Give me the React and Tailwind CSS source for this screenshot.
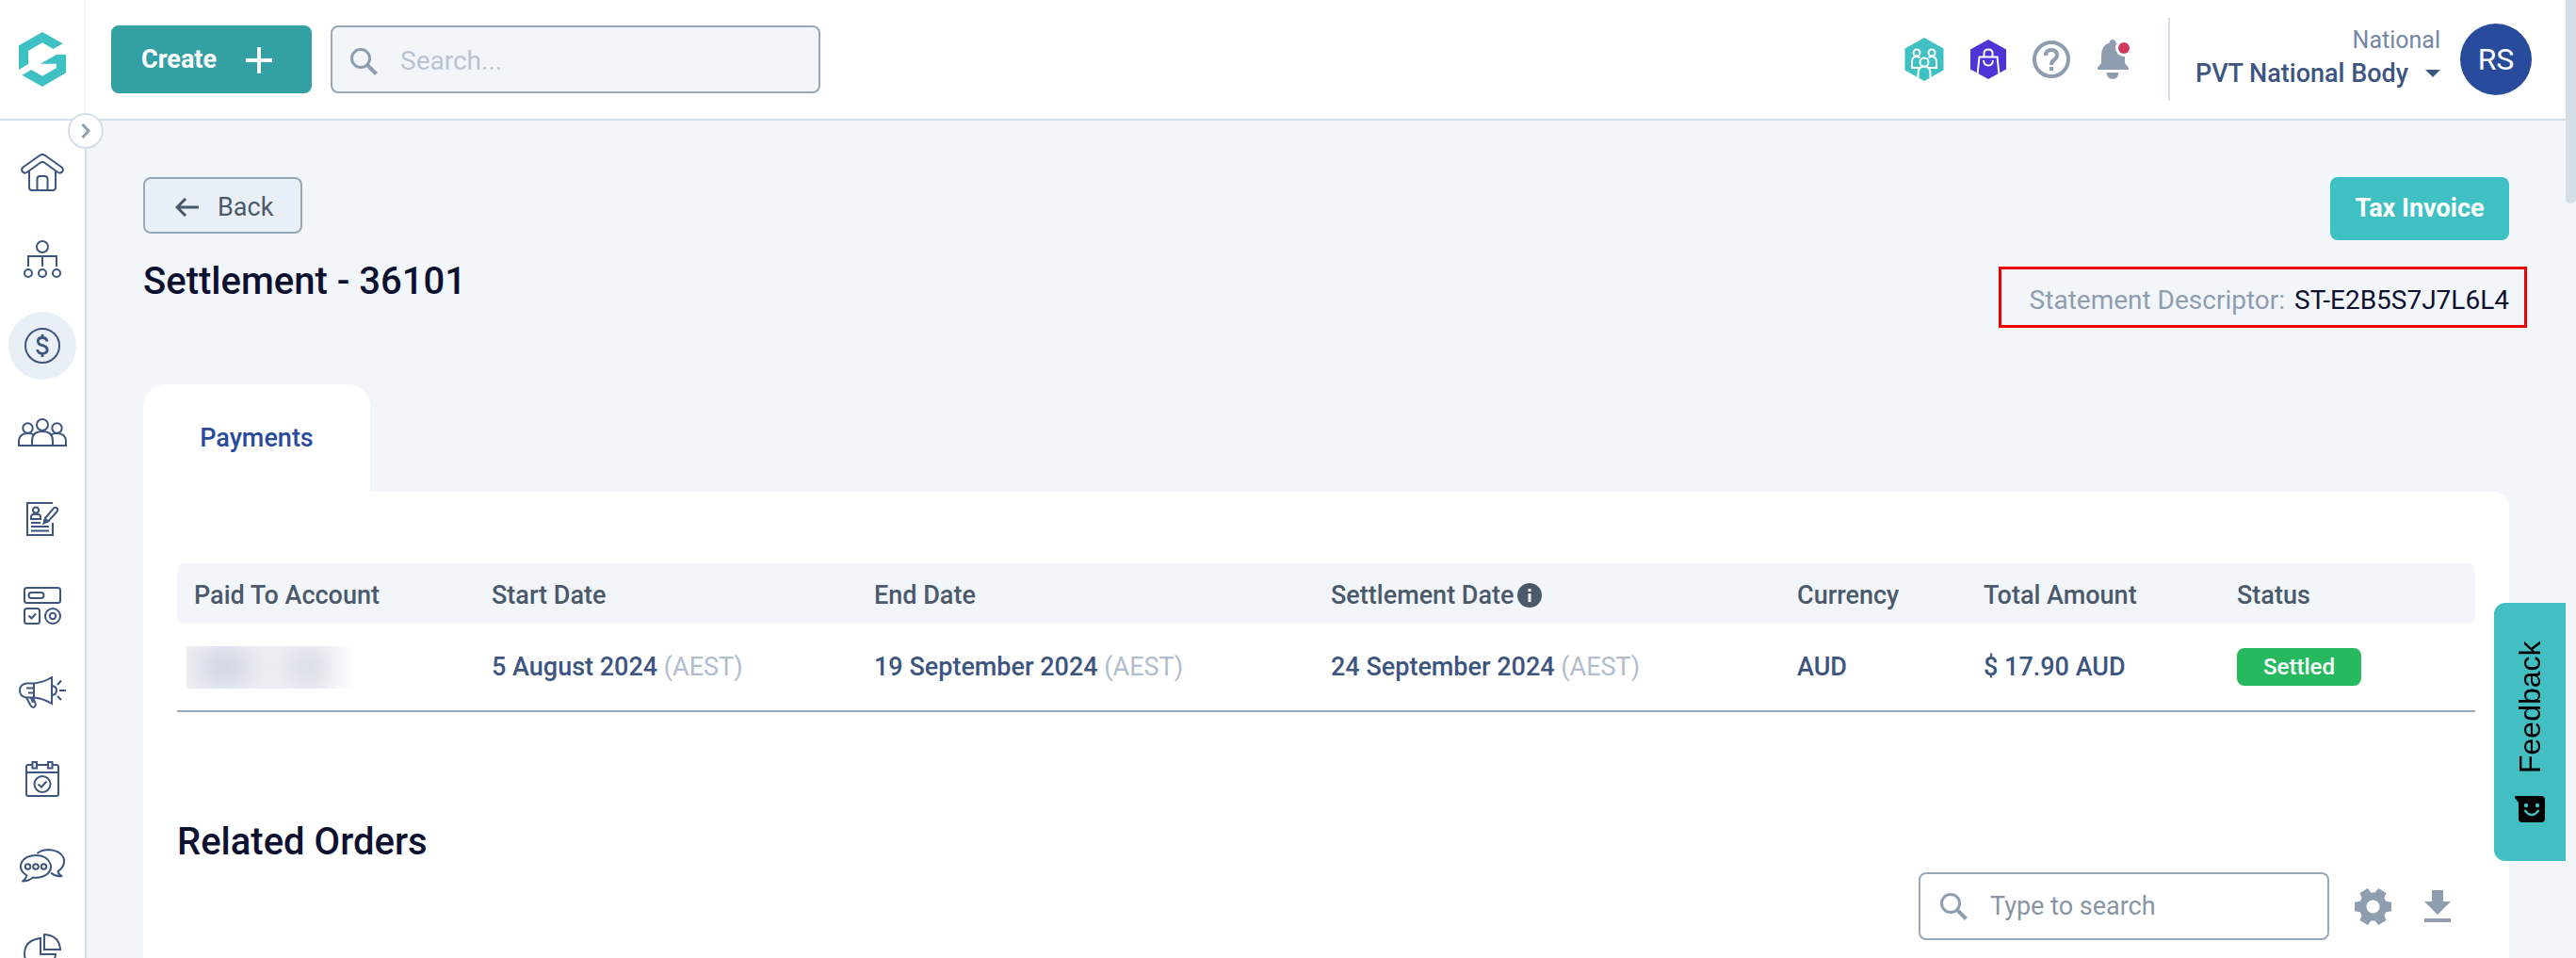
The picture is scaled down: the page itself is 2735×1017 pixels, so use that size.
import React, { useState } from 'react';

// Line icons for the side bar, all drawn on their own pixel grid
const HomeIcon = () => (
  <svg width="46" height="40" viewBox="0 0 46 40" fill="none" stroke="currentColor" strokeWidth="2" strokeLinejoin="round">
    <path d="M20.500 1.800Q23 .4 25.500 1.800L43.500 14.500Q46 17 44 19.500Q42 21.500 39.500 20L26 10.200Q23 8 20 10.200L6.500 20Q4 21.500 2 19.500Q0 17 2.500 14.500Z" />
    <path d="M9 18.500V36Q9 39 12 39H34Q37 39 37 36V18.500" />
    <path d="M17.500 38V27Q17.500 24 20.500 24H25.500Q28.500 24 28.500 27V38" />
  </svg>
);

const OrgIcon = () => (
  <svg width="40" height="40" viewBox="0 0 40 40" fill="none" stroke="currentColor" strokeWidth="2">
    <circle cx="20" cy="7" r="6" />
    <path d="M5 28V17H35V28M20 17V28" />
    <circle cx="5" cy="35" r="4" />
    <circle cx="20" cy="35" r="4" />
    <circle cx="35" cy="35" r="4" />
  </svg>
);

const DollarIcon = () => (
  <svg width="38" height="38" viewBox="0 0 38 38" fill="none" stroke="currentColor" strokeWidth="2">
    <circle cx="19" cy="19" r="18" />
    <path strokeWidth="2.800" d="M24 14.500Q23.500 10.500 19 10.500Q14.300 10.500 14.300 14.200Q14.300 17.500 19 18.700Q24.200 20 24.200 23.600Q24.200 27.300 19 27.300Q14 27.300 13.700 23M19 7V11M19 27V31" />
  </svg>
);

const PeopleIcon = () => (
  <svg width="52" height="30" viewBox="0 0 52 30" fill="none" stroke="currentColor" strokeWidth="2">
    <circle cx="26" cy="7" r="6" />
    <circle cx="10.500" cy="10.500" r="5.200" />
    <circle cx="41.500" cy="10.500" r="5.200" />
    <path d="M15 29V24Q15 14 26 14Q37 14 37 24V29" />
    <path d="M17 17.500Q14.500 16 10.500 16Q1 16 1 25V29H51V25Q51 16 41.500 16Q37.500 16 35 17.500" />
  </svg>
);

const FormIcon = () => (
  <svg width="34" height="36" viewBox="0 0 34 36" fill="none" stroke="currentColor" strokeWidth="2">
    <path d="M28 1H1V35H28V22" />
    <circle cx="10" cy="8.500" r="3" />
    <path d="M5 18V16Q5 13 8 13H12Q15 13 15 16V18ZM5 22H15M5 26H24M5 30.500H24" />
    <path d="M19 22L20 17L29 6.500Q31 5 32.500 6.500Q34 8 32.500 10L23.500 20.200Z" />
    <path d="M18.500 22.500L20 17.500L23 20.500Z" fill="currentColor" />
  </svg>
);

const WidgetsIcon = () => (
  <svg width="40" height="40" viewBox="0 0 40 40" fill="none" stroke="currentColor" strokeWidth="2">
    <rect x="1" y="1" width="38" height="16" rx="2.500" />
    <rect x="5.500" y="6" width="16" height="6" rx="3" />
    <rect x="1" y="23" width="16" height="16" rx="2.500" />
    <path d="M5.500 30.500L8.500 33.500L13 28.500" />
    <circle cx="31" cy="31" r="8" />
    <circle cx="31" cy="31" r="3.200" />
  </svg>
);

const MegaphoneIcon = () => (
  <svg width="50" height="34" viewBox="0 0 50 34" fill="none" stroke="currentColor" strokeWidth="2">
    <path d="M16 7.500H8Q1 8.500 1 15Q1 21.500 8 22.500H16ZM16 7.500Q26 6.500 35 1V29Q26 23.500 16 22.500M8 12.500H15M10 17.500H15" />
    <path d="M8 22.500L12.500 31Q14 33.500 16.500 32.500Q18.500 31 17.500 28.500L15 22.500M13 23L15 28" />
    <path d="M35 10Q40 10.500 40 15Q40 19.500 35 20M41 9L45 4.500M43 15H50M41 21L45 25" />
  </svg>
);

const CalendarIcon = () => (
  <svg width="36" height="38" viewBox="0 0 36 38" fill="none" stroke="currentColor" strokeWidth="2">
    <path d="M7 4H3Q1 4 1 6V35Q1 37 3 37H33Q35 37 35 35V6Q35 4 33 4H29M12 4H24M1 12H35" />
    <rect x="7.500" y="1" width="4.500" height="6.500" />
    <rect x="24" y="1" width="4.500" height="6.500" />
    <circle cx="18" cy="24.500" r="8.500" />
    <path d="M13.500 24.500L17 27.500L22.500 21.500" />
  </svg>
);

const ChatIcon = () => (
  <svg width="48" height="36" viewBox="0 0 48 36" fill="none" stroke="currentColor" strokeWidth="2" strokeLinejoin="round">
    <path d="M17 7Q7 7 2.500 13.500Q-1.500 21 5 26.500L7.500 28.500Q6.500 32 3 34.500Q9 34.500 14 30.500Q23 31.500 29 27Q34.500 22 32.500 16Q29 7 17 7Z" />
    <path d="M18.500 5Q23 1 31 1Q43 2 46.500 9.500Q49 18 40.500 24Q41 27 44.500 29Q38.500 30 33 25.500" />
    <circle cx="8.500" cy="19" r="2.800" />
    <circle cx="17" cy="19" r="2.800" />
    <circle cx="25.500" cy="19" r="2.800" />
  </svg>
);

const PieIcon = () => (
  <svg width="40" height="40" viewBox="0 0 40 40" fill="none" stroke="currentColor" strokeWidth="2">
    <path d="M22 1Q38 2 39 17H22Z" />
    <path d="M18 5Q1 7 1 22Q2 38 18 39Q32 38 34 22H18Z" />
  </svg>
);

const Logo = () => (
  <svg width="50" height="58" viewBox="0 0 50 58" fill="#3fc1c4">
    <path d="M25 0L46.700 12.300L36.700 18L25 11.300L10 20V34L0 40V14.300Z" />
    <path d="M50 24V43.300L25 58L3.300 45.700L13.300 40L25 46.700L40 38V33.700H22.700L40 24Z" />
  </svg>
);

const SearchIcon = () => (
  <svg className="shrink-0" width="29" height="29" viewBox="0 0 29 29" fill="none" stroke="#8f9db0" strokeWidth="3">
    <circle cx="11" cy="11" r="9.500" />
    <path d="M17.500 17.500L27.500 27.500" strokeWidth="4" />
  </svg>
);

const navItems = [
  { name: 'Home', icon: HomeIcon },
  { name: 'Organisation', icon: OrgIcon },
  { name: 'Finance', icon: DollarIcon },
  { name: 'People', icon: PeopleIcon },
  { name: 'Registrations', icon: FormIcon },
  { name: 'Widgets', icon: WidgetsIcon },
  { name: 'Marketing', icon: MegaphoneIcon },
  { name: 'Events', icon: CalendarIcon },
  { name: 'Messages', icon: ChatIcon },
  { name: 'Reports', icon: PieIcon },
];

const SideBar = () => {
  const [active, setActive] = useState('Finance');

  return (
    <aside className="relative w-[92px] shrink-0 bg-white border-r-2 border-[#d5dee7]">
      <button aria-label="Expand menu" className="absolute -top-2 left-[72px] z-10 flex size-[38px] items-center justify-center rounded-full border-2 border-[#d5dee7] bg-white">
        <svg width="10" height="16" viewBox="0 0 10 16" fill="none" stroke="#8f9db0" strokeWidth="3">
          <path d="M1.500 1L8 8L1.500 15" />
        </svg>
      </button>
      <nav className="flex flex-col gap-5 pt-[19px] pl-[9px] text-[#3d557f]">
        {navItems.map(({ name, icon: Icon }) => (
          <a
            key={name}
            href="#"
            aria-label={name}
            onClick={() => setActive(name)}
            className={`flex size-[72px] shrink-0 items-center justify-center rounded-full ${active === name ? 'bg-[#e9eff6]' : ''}`}
          >
            <Icon />
          </a>
        ))}
      </nav>
    </aside>
  );
};

const Header = () => (
  <header className="flex h-32 shrink-0 items-center border-b-2 border-[#d5dee7] bg-white">
    <a href="#" aria-label="Dashboard" className="flex h-full w-[91px] shrink-0 items-center justify-center border-r-2 border-[#f2f6fb]">
      <Logo />
    </a>
    <button className="ml-[27px] flex h-[72px] w-[213px] items-center justify-between rounded-lg bg-[#33a1a4] pr-[42px] pl-8 pt-px text-[27px] font-bold text-white">
      Create
      <svg width="28" height="28" viewBox="0 0 28 28" stroke="white" strokeWidth="4">
        <path d="M14 0V28M0 14H28" />
      </svg>
    </button>
    <label className="ml-5 flex h-[72px] w-[520px] items-center gap-6 rounded-lg border-2 border-[#98a8b9] bg-[#f2f6fb] pl-[19px] pt-1">
      <SearchIcon />
      <input type="search" aria-label="Search" placeholder="Search..." className="w-full min-w-0 bg-transparent text-[28px] outline-none placeholder:text-[#b9c3d2]" />
    </label>

    <div className="ml-auto flex items-center gap-7">
      <button aria-label="Community">
        <svg width="42" height="46" viewBox="0 0 42 46" fill="none" stroke="white" strokeWidth="2">
          <path d="M21 0L41.500 11.500V34.500L21 46L.5 34.500V11.500Z" fill="#3fc1c4" stroke="none" />
          <circle cx="13" cy="16" r="3.500" />
          <circle cx="29" cy="16" r="3.500" />
          <path d="M16 32H8V26Q8 20 13 20Q15 20 16.500 21.500M26 32H34V26Q34 20 29 20Q27 20 25.500 21.500" />
          <path d="M14.500 43V38Q14.500 30.500 21 30.500Q27.500 30.500 27.500 38V43" fill="#3fc1c4" />
          <circle cx="21" cy="26" r="4.500" fill="#3fc1c4" />
        </svg>
      </button>
      <button aria-label="Shop">
        <svg width="38" height="42" viewBox="0 0 38 42" fill="none" stroke="white" strokeWidth="2">
          <path d="M19 0L38 10.500V31.500L19 42L0 31.500V10.500Z" fill="#4b35d6" stroke="none" />
          <path d="M7.500 37L9.500 18.500H28.500L30.500 37M14.500 18V14.500Q14.500 10.500 19 10.500Q23.500 10.500 23.500 14.500V18M14 22Q14.500 27.500 19 27.500Q23.500 27.500 24 22" />
        </svg>
      </button>
      <button aria-label="Help">
        <svg width="40" height="40" viewBox="0 0 40 40" fill="none" stroke="#8f9db0" strokeWidth="4">
          <circle cx="20" cy="20" r="18" />
          <path d="M14 16Q14 10 20 10Q26 10 26 15.500Q26 18.500 23 20.500Q20 22.500 20 26" />
          <path d="M20 28V32" />
        </svg>
      </button>
      <button aria-label="Notifications">
        <svg width="36" height="42" viewBox="0 0 36 42" fill="#8f9db0">
          <path d="M17 0Q20 0 20.500 3.500Q30 6 30 17V25L34 30V32H1V30L5 25V17Q5 6 13.500 3.500Q14 0 17 0Z" />
          <path d="M10.500 35H23.500Q23 42 17 42Q11 42 10.500 35Z" />
          <circle cx="29" cy="9" r="9" fill="white" />
          <circle cx="29" cy="9" r="6" fill="#cd3a5c" />
        </svg>
      </button>
    </div>
    <div className="ml-10 h-[88px] w-[2px] bg-[#d5dee7]" />
    <button className="ml-[27px] pb-1 text-right leading-[34px]">
      <span className="block text-[25px] leading-[34px] text-[#7786a3]">National</span>
      <span className="flex items-center gap-[18px] text-[27px] leading-9 font-medium text-[#3d557f]">
        PVT National Body
        <svg width="16" height="8" viewBox="0 0 16 8" fill="currentColor">
          <path d="M0 0H16L8 8Z" />
        </svg>
      </span>
    </button>
    <div className="mr-9 ml-[21px] flex size-[76px] items-center justify-center rounded-full bg-[#284b9b] text-[32px] text-white">RS</div>
  </header>
);

const columns = [
  { label: 'Paid To Account', width: 'w-[316px]' },
  { label: 'Start Date', width: 'w-[406px]' },
  { label: 'End Date', width: 'w-[485px]' },
  { label: 'Settlement Date', width: 'w-[495px]', info: true },
  { label: 'Currency', width: 'w-[198px]' },
  { label: 'Total Amount', width: 'w-[269px]' },
  { label: 'Status', width: 'w-[271px]' },
];

const DateCell = ({ date }) => (
  <td className="pl-[18px]">
    {date} <span className="font-normal text-[#b1bccd]">(AEST)</span>
  </td>
);

const PaymentsTable = () => (
  <table className="w-full table-fixed text-left text-[27px] leading-9 font-medium">
    <thead className="text-[#4b5a6b]">
      <tr className="h-16">
        {columns.map((col) => (
          <th key={col.label} className={`${col.width} bg-[#f2f6fb] pt-1 pl-[18px] font-medium first:rounded-l-lg last:rounded-r-lg`}>
            <span className="flex items-center gap-1">
              {col.label}
              {col.info && (
                <svg width="26" height="26" viewBox="0 0 26 26" fill="#4b5a6b">
                  <circle cx="13" cy="13" r="13" />
                  <path d="M11.500 6H14.500V9H11.500ZM11.500 11H14.500V20H11.500Z" fill="white" />
                </svg>
              )}
            </span>
          </th>
        ))}
      </tr>
    </thead>
    <tbody className="text-[#3d557f]">
      <tr className="h-[93px] border-b-2 border-[#98a8b9]">
        <td className="pl-[10px]">
          {/* account name is hidden */}
          <div className="h-[45px] w-[177px] overflow-hidden bg-linear-to-r from-[#f0f1f5] from-80% to-white">
            <div className="flex h-full items-center gap-10 blur-lg">
              <div className="ml-3 h-8 w-14 rounded-full bg-[#c3cbdc]" />
              <div className="h-9 w-10 rounded-full bg-[#cdd3e0]" />
            </div>
          </div>
        </td>
        <DateCell date="5 August 2024" />
        <DateCell date="19 September 2024" />
        <DateCell date="24 September 2024" />
        <td className="pl-[18px]">AUD</td>
        <td className="pl-[18px]">$ 17.90 AUD</td>
        <td className="pl-[18px]">
          <span className="flex h-10 w-[132px] items-center justify-center rounded-lg bg-[#27b960] text-2xl text-white">Settled</span>
        </td>
      </tr>
    </tbody>
  </table>
);

const Settlement = () => (
  <main className="min-w-0 flex-1 overflow-hidden bg-[#f2f6fb] px-[60px] pt-[60px]">
    <div className="flex h-[220px] items-start justify-between">
      <div>
        <button className="flex h-[60px] w-[169px] items-center gap-[20px] rounded-lg border-2 border-[#98a8b9] bg-[#e9eff6] pt-1 pl-8 text-[27px] text-[#4b5a6b]">
          <svg width="25" height="20" viewBox="0 0 25 20" fill="none" stroke="currentColor" strokeWidth="3">
            <path d="M11 1L2 10L11 19M2 10H25" />
          </svg>
          Back
        </button>
        <h1 className="mt-6 text-[40px] leading-[54px] font-medium text-[#0e1030]">Settlement - 36101</h1>
      </div>
      <div className="flex flex-col items-end">
        <button className="h-[67px] w-[190px] rounded-lg bg-[#3fc1c4] text-[27px] font-bold text-white">Tax Invoice</button>
        <p className="mt-7 -mr-[19px] flex h-[65px] items-center gap-[10px] border-3 border-[#ee0000] pt-[6px] pr-4 pl-[30px] text-[28px] text-[#8f9db0]">
          Statement Descriptor: <span className="text-[#0e1030]">ST-E2B5S7J7L6L4</span>
        </p>
      </div>
    </div>

    <button role="tab" aria-selected="true" className="block h-[114px] w-[241px] rounded-t-[24px] bg-white text-[27px] font-medium text-[#284b9b]">Payments</button>
    <section className="h-[600px] rounded-tr-2xl bg-white px-9 pt-[76px]">
      <PaymentsTable />
      <h2 className="mt-[111px] text-[40px] leading-[54px] font-medium text-[#0e1030]">Related Orders</h2>
      <div className="mt-[5px] flex items-center justify-end pr-[26px]">
        <label className="flex h-[72px] w-[436px] items-center gap-6 rounded-lg border-2 border-[#98a8b9] pl-[21px]">
          <SearchIcon />
          <input type="search" aria-label="Search orders" placeholder="Type to search" className="w-full min-w-0 bg-transparent text-[27px] outline-none placeholder:text-[#8a94a3]" />
        </label>
        <button aria-label="Settings" className="ml-[27px]">
          <svg width="39" height="39" viewBox="1 1 22 22" fill="#8f9db0">
            <path fillRule="evenodd" d="M1 9.300V14.700L4.200 15.200L5.300 17.200L4.100 20.200L8.800 23L10.800 20.400H13.200L15.200 23L19.900 20.200L18.700 17.200L19.800 15.200L23 14.700V9.300L19.800 8.800L18.700 6.800L19.900 3.800L15.200 1L13.200 3.600H10.800L8.800 1L4.100 3.800L5.300 6.800L4.200 8.800ZM12 8A4 4 0 1 0 12 16A4 4 0 1 0 12 8Z" />
          </svg>
        </button>
        <button aria-label="Download" className="ml-[35px]">
          <svg width="28" height="34" viewBox="0 0 28 34" fill="#8f9db0">
            <path d="M8 0H20V12H28L14 26L0 12H8ZM0 30H28V34H0Z" />
          </svg>
        </button>
      </div>
    </section>
  </main>
);

const App = () => {
  return (
    <div className="relative flex h-screen overflow-hidden bg-[#f2f6fb] font-['Roboto',sans-serif]">
      <div className="flex min-w-0 flex-1 flex-col">
        <Header />
        <div className="flex min-h-0 flex-1">
          <SideBar />
          <Settlement />
        </div>
      </div>
      {/* scroll track */}
      <div className="w-[11px] shrink-0 bg-[#f2f6fb]">
        <div className="h-[216px] rounded-b-lg bg-[#d5dee7]" />
      </div>
      <button className="absolute top-[640px] right-[11px] flex h-[274px] w-[76px] rotate-180 items-center justify-center gap-6 rounded-r-xl bg-[#43bfc4] font-['Liberation_Sans',sans-serif] text-[32px] text-black [writing-mode:vertical-rl]">
        <svg className="rotate-180" width="32" height="28" viewBox="0 0 32 28">
          <path d="M1 0H28Q32 0 32 4V24Q32 28 28 28H8Q4 28 4 24V7L0 2Q0 0 1 0Z" />
          <path d="M10.500 15Q18 25 25.500 15" fill="none" stroke="#43bfc4" strokeWidth="2.500" />
          <circle cx="12" cy="10" r="2.200" fill="#43bfc4" />
          <circle cx="24" cy="10" r="2.200" fill="#43bfc4" />
        </svg>
        Feedback
      </button>
    </div>
  );
};

export default App;
